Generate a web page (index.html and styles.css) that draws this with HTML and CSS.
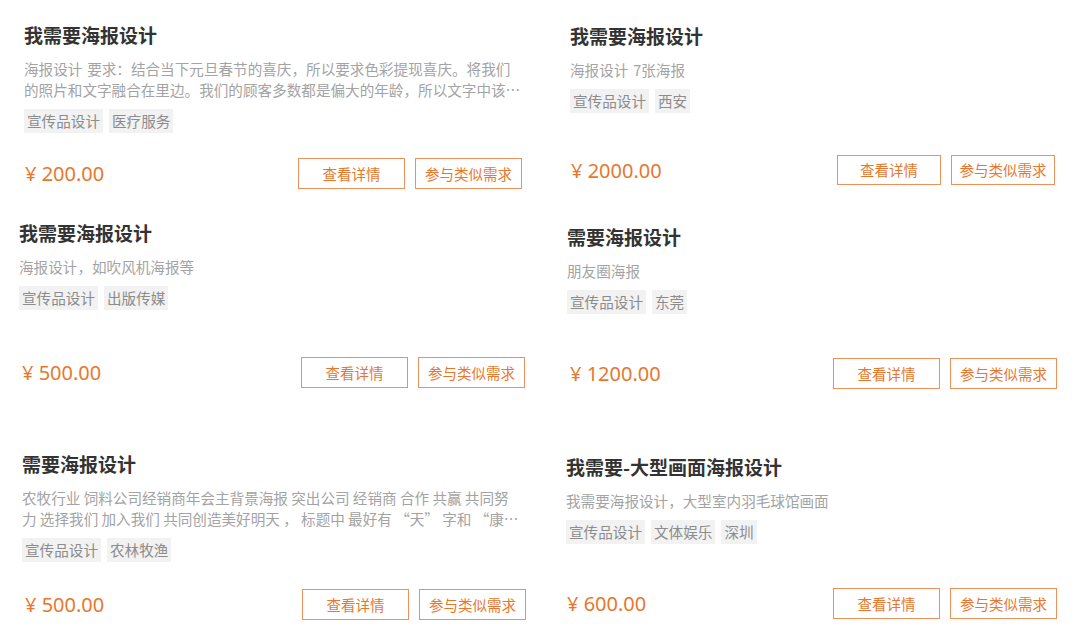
FILE: index.html
```html
<!DOCTYPE html>
<html lang="zh-CN">
<head>
  <meta charset="UTF-8" />
  <meta name="viewport" content="width=device-width, initial-scale=1.0"/>
  <title>海报设计需求</title>
  <link rel="stylesheet" href="styles.css">
</head>
<body>
  <div class="board">

    <div class="card card-1">
      <h3 class="title">我需要海报设计</h3>
      <p class="desc">海报设计 要求：结合当下元旦春节的喜庆，所以要求色彩提现喜庆。将我们的照片和文字融合在里边。我们的顾客多数都是偏大的年龄，所以文字中该大一些，方便阅读。</p>
      <div class="tags">
        <span class="tag">宣传品设计</span>
        <span class="tag">医疗服务</span>
      </div>
      <div class="foot">
        <span class="price">¥ 200.00</span>
        <div class="actions">
          <a class="btn" href="#">查看详情</a>
          <a class="btn" href="#">参与类似需求</a>
        </div>
      </div>
    </div>

    <div class="card card-2">
      <h3 class="title">我需要海报设计</h3>
      <p class="desc">海报设计 7张海报</p>
      <div class="tags">
        <span class="tag">宣传品设计</span>
        <span class="tag">西安</span>
      </div>
      <div class="foot">
        <span class="price">¥ 2000.00</span>
        <div class="actions">
          <a class="btn" href="#">查看详情</a>
          <a class="btn" href="#">参与类似需求</a>
        </div>
      </div>
    </div>

    <div class="card card-3">
      <h3 class="title">我需要海报设计</h3>
      <p class="desc">海报设计，如吹风机海报等</p>
      <div class="tags">
        <span class="tag">宣传品设计</span>
        <span class="tag">出版传媒</span>
      </div>
      <div class="foot">
        <span class="price">¥ 500.00</span>
        <div class="actions">
          <a class="btn" href="#">查看详情</a>
          <a class="btn" href="#">参与类似需求</a>
        </div>
      </div>
    </div>

    <div class="card card-4">
      <h3 class="title">需要海报设计</h3>
      <p class="desc">朋友圈海报</p>
      <div class="tags">
        <span class="tag">宣传品设计</span>
        <span class="tag">东莞</span>
      </div>
      <div class="foot">
        <span class="price">¥ 1200.00</span>
        <div class="actions">
          <a class="btn" href="#">查看详情</a>
          <a class="btn" href="#">参与类似需求</a>
        </div>
      </div>
    </div>

    <div class="card card-5">
      <h3 class="title">需要海报设计</h3>
      <p class="desc">农牧行业 饲料公司经销商年会主背景海报 突出公司 经销商 合作 共赢 共同努<br>力 选择我们 加入我们 共同创造美好明天 ， 标题中 最好有 “天” 字和 “康” 字，画面大气。</p>
      <div class="tags">
        <span class="tag">宣传品设计</span>
        <span class="tag">农林牧渔</span>
      </div>
      <div class="foot">
        <span class="price">¥ 500.00</span>
        <div class="actions">
          <a class="btn" href="#">查看详情</a>
          <a class="btn" href="#">参与类似需求</a>
        </div>
      </div>
    </div>

    <div class="card card-6">
      <h3 class="title">我需要-大型画面海报设计</h3>
      <p class="desc">我需要海报设计，大型室内羽毛球馆画面</p>
      <div class="tags">
        <span class="tag">宣传品设计</span>
        <span class="tag">文体娱乐</span>
        <span class="tag">深圳</span>
      </div>
      <div class="foot">
        <span class="price">¥ 600.00</span>
        <div class="actions">
          <a class="btn" href="#">查看详情</a>
          <a class="btn" href="#">参与类似需求</a>
        </div>
      </div>
    </div>

  </div>
</body>
</html>
```

FILE: styles.css
```css
body {
  margin: 0;
  background: #ffffff;
  font-family: "Noto Sans CJK SC", "Noto Sans", sans-serif;
}

.board {
  display: grid;
  grid-template-columns: 540px 540px;
  grid-template-rows: 200px 230px 205px;
  width: 1080px;
}

.card {
  display: flex;
  flex-direction: column;
  box-sizing: border-box;
  min-width: 0;
}

/* each tile sits a little differently */
.card-1 { padding: 23px 18px 11px 24px; }
.card-2 { padding: 24px 25px 15px 30px; }
.card-3 { padding: 21px 15px 42px 19px; }
.card-4 { padding: 25px 23px 41px 27px; }
.card-5 { padding: 22px 14px 15px 22px; }
.card-6 { padding: 25px 23px 16px 26px; }

.title {
  margin: 0 0 11px;
  font-size: 19px;
  line-height: 24px;
  font-weight: bold;
  color: #333;
}

.desc {
  margin: 0;
  font-size: 14.6px;
  line-height: 21px;
  word-spacing: 1.5px;
  color: #a3a3a3;
  display: -webkit-box;
  -webkit-line-clamp: 2;
  -webkit-box-orient: vertical;
  overflow: hidden;
}

.card-5 .desc {
  word-spacing: 0;
}

.tags {
  display: flex;
  gap: 6px;
  margin-top: 9px;
}

.tag {
  height: 24px;
  line-height: 24px;
  padding: 0 3px;
  background: #f2f2f2;
  color: #8c8c8c;
  font-size: 14.6px;
}

.foot {
  margin-top: auto;
  display: flex;
  justify-content: space-between;
  align-items: center;
}

.price {
  font-family: "Noto Sans", sans-serif;
  font-size: 20px;
  color: #e8772e;
  padding-left: 1px;
}

.card-3 .price,
.card-4 .price,
.card-5 .price { padding-left: 3px; }

.actions {
  display: flex;
  gap: 10px;
}

.btn {
  display: block;
  box-sizing: border-box;
  width: 107px;
  height: 31px;
  line-height: 29px;
  border: 1px solid #eb9159;
  text-align: center;
  text-decoration: none;
  color: #e8772e;
  font-size: 14.5px;
}

.card-2 .btn {
  width: 104px;
  height: 30px;
  line-height: 28px;
}
```
